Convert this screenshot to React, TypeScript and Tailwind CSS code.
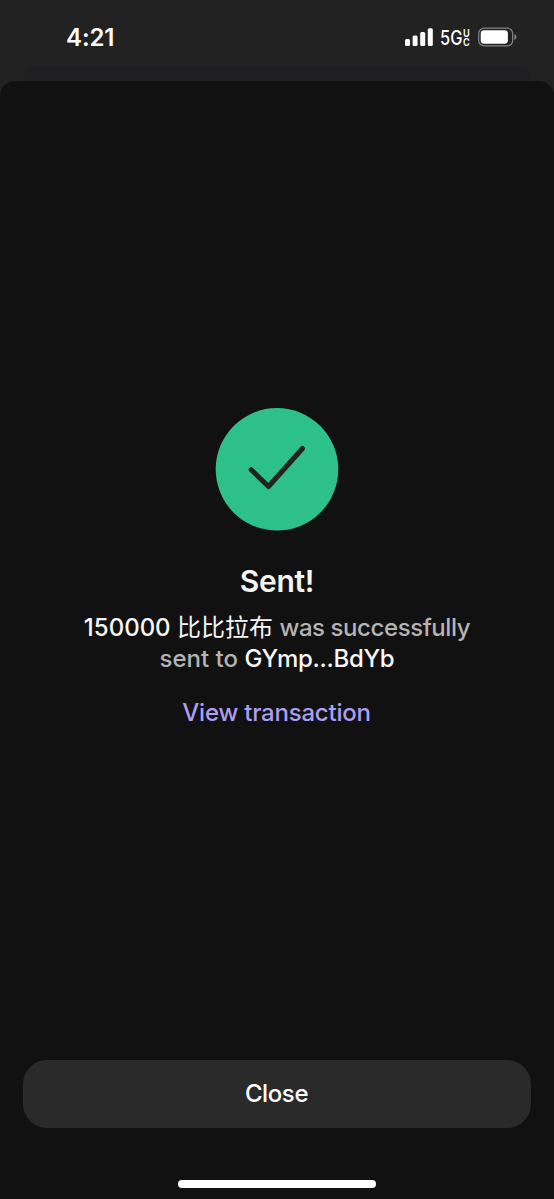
const SIGNAL_BARS = [
  { x: 0, height: 7 },
  { x: 7.6, height: 10.4 },
  { x: 15.2, height: 13.9 },
  { x: 22.8, height: 17.8 },
];

function StatusBar() {
  return (
    <div className="flex h-[66px] items-start justify-between pt-[22px] pr-[37px] pl-[66px] text-white">
      <div className="pt-px text-[24px] leading-[30px] font-semibold tracking-[-0.1px]">4:21</div>
      <div className="flex h-[30px] items-center">
        <svg width="28" height="18" viewBox="0 0 28 18" fill="currentColor">
          {SIGNAL_BARS.map((bar) => (
            <rect key={bar.x} x={bar.x} y={18 - bar.height} width="5" height={bar.height} rx="1.5" />
          ))}
        </svg>
        <div className="ml-[7px] flex items-center pt-px">
          <span className="w-[23px]">
            <span className="inline-block origin-left scale-x-[0.82] text-[20px] leading-[30px] font-medium">
              5G
            </span>
          </span>
          <span className="flex w-[7px] origin-left scale-x-[0.92] flex-col text-[10px] leading-[8.5px] font-semibold">
            <span>U</span>
            <span>C</span>
          </span>
        </div>
        <svg className="ml-[8px]" width="39" height="20" viewBox="0 0 39 20" fill="none">
          <rect x="0.7" y="1.2" width="34" height="17.6" rx="5.4" stroke="#858585" strokeWidth="1.2" />
          <rect x="2.7" y="3.3" width="27.2" height="13.4" rx="3.4" fill="white" />
          <path d="M36.4 7v6c1.2-.5 2-1.6 2-3s-.8-2.500-2-3z" fill="#858585" />
        </svg>
      </div>
    </div>
  );
}

function SuccessMark() {
  return (
    <svg width="124" height="123" viewBox="0 0 124 123" fill="none">
      <circle cx="62" cy="61.3" r="61.3" fill="#2ec08b" />
      <path
        d="M36.2 61.700 53.500 78.500 87.500 40.500"
        stroke="#222222"
        strokeWidth="5"
        strokeLinecap="round"
        strokeLinejoin="round"
      />
    </svg>
  );
}

export default function App() {
  return (
    <div className="flex h-[1199px] w-[554px] flex-col overflow-hidden bg-[#222222] font-['Inter','Noto_Sans_CJK_SC',sans-serif]">
      <StatusBar />
      {/* edge of the screen behind the sheet */}
      <div className="mx-[23px] h-[15px] shrink-0 rounded-t-[14px] bg-[#202022]" />
      <main className="flex flex-1 flex-col items-center rounded-t-[15px] bg-[#111111] px-[23px] pt-[327px]">
        <SuccessMark />
        <h1 className="mt-[30px] text-[30px] leading-[40px] font-semibold tracking-[-0.3px] text-[#f5f5f5]">
          Sent!
        </h1>
        <p className="mt-[11px] text-center text-[24px] leading-[31px] font-medium text-[#b4b4b4]">
          <span className="text-[#f7f7f7]">
            150000 <span className="font-normal">比比拉布</span>
          </span>{' '}
          <span className="tracking-[-0.42px]">was successfully</span>
          <br />
          sent to <span className="tracking-[-0.3px] text-[#f7f7f7]">GYmp...BdYb</span>
        </p>
        <button className="mt-[23px] mr-px text-[24px] leading-[32px] font-medium tracking-[-0.23px] text-[#ab9ff2]">
          View transaction
        </button>
        <button className="mt-auto h-[68px] w-full shrink-0 rounded-[24px] bg-[#2a2a2a] pr-px text-[24px] font-medium tracking-[-0.4px] text-white">
          Close
        </button>
        <div className="mt-[52px] mb-[11px] h-[8px] w-[198px] shrink-0 rounded-full bg-white" />
      </main>
    </div>
  );
}
